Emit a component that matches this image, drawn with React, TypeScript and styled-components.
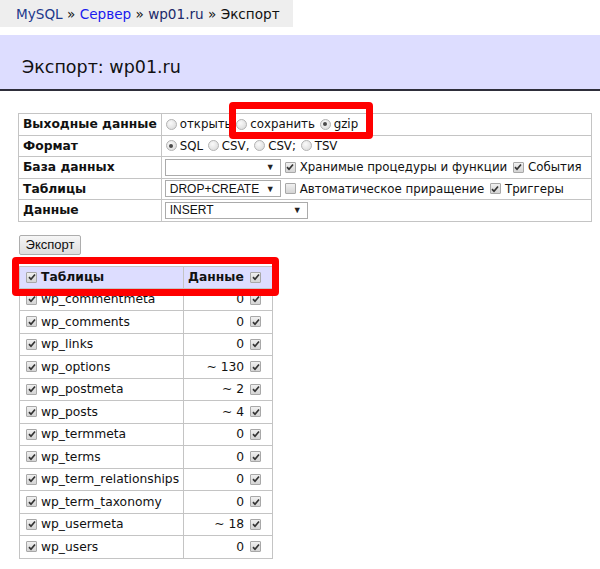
import styled, { createGlobalStyle } from "styled-components"

const GlobalStyle = createGlobalStyle`
  body {
    margin: 0;
    background: #fff;
    font-family: "DejaVu Sans", Verdana, sans-serif;
    color: #111;
  }
`

const Page = styled.div`
  position: relative;
  width: 600px;
  height: 569px;
  overflow: hidden;
`
const Crumbs = styled.div`
  display: inline-flex;
  align-items: center;
  width: 293px;
  height: 27px;
  box-sizing: border-box;
  padding-left: 16px;
  background: #eeeeee;
  font-size: 13.6px;
  white-space: pre;
`
const Crumb = styled.span<{ $color?: string }>`
  color: ${(p) => p.$color || "#111"};
`
const TitleBar = styled.div`
  margin-top: 8px;
  height: 56px;
  box-sizing: border-box;
  display: flex;
  align-items: center;
  padding: 9px 0 0 22px;
  background: #ddddff;
  border-bottom: 2px solid #2e2e3a;
  font-size: 17.5px;
  color: #111;
`
const Content = styled.div`
  padding: 22px 0 0 18px;
  font-size: 12.3px;
`
const Grid = styled.table<{ $width: number }>`
  width: ${(p) => p.$width}px;
  border-collapse: collapse;
  border: 1px solid #c4c4c4;
`
const Label = styled.td`
  width: 132px;
  height: 20.5px;
  padding: 0 4px;
  font-weight: bold;
  border: 1px solid #c4c4c4;
  white-space: nowrap;
`
const Value = styled.td`
  padding: 0 3px;
  border: 1px solid #c4c4c4;
  white-space: nowrap;
  font-size: 11.8px;
`
const Line = styled.div`
  display: flex;
  align-items: center;
  white-space: pre;
`
const Radio = styled.span<{ $checked?: boolean }>`
  display: inline-block;
  position: relative;
  width: 11px;
  height: 11px;
  margin: 0 3px 0 1px;
  border-radius: 50%;
  box-sizing: border-box;
  border: 1px solid #b4b4b4;
  background: radial-gradient(circle at 40% 35%, #fafafa, #d6d6d6);
  &::after {
    content: "";
    display: ${(p) => (p.$checked ? "block" : "none")};
    position: absolute;
    left: 2.5px;
    top: 2.5px;
    width: 4px;
    height: 4px;
    border-radius: 50%;
    background: #4a4a4a;
  }
`
const Box = styled.span`
  display: inline-flex;
  align-items: center;
  justify-content: center;
  width: 11px;
  height: 11px;
  box-sizing: border-box;
  margin: 0 4px 0 2px;
  border: 1px solid #a8a8a8;
  border-radius: 1px;
  background: linear-gradient(#f0f0f0, #d4d4d4);
  flex-shrink: 0;
`
const Select = styled.div<{ $width: number }>`
  display: inline-flex;
  align-items: center;
  justify-content: space-between;
  width: ${(p) => p.$width}px;
  height: 17px;
  box-sizing: border-box;
  margin: 1px 2px 1px 0;
  padding: 0 5px 0 4px;
  border: 1px solid #ababab;
  background: #fff;
  font-family: "Liberation Sans", Arial, sans-serif;
  font-size: 12px;
`
const Arrow = styled.span`
  font-size: 9px;
  color: #222;
`
const Button = styled.div`
  display: inline-flex;
  align-items: center;
  justify-content: center;
  margin: 13px 0 11px 1px;
  width: 62px;
  height: 20px;
  box-sizing: border-box;
  border: 1px solid #adadad;
  border-radius: 2px;
  background: linear-gradient(#f6f6f6, #dedede);
  font-family: "Liberation Sans", Arial, sans-serif;
  font-size: 13px;
`
const TablesWrap = styled.div`
  margin-left: 1px;
`
const HeadCell = styled.th<{ $right?: boolean }>`
  height: 21px;
  padding: 0 ${(p) => (p.$right ? "7px" : "4px")} 0 4px;
  background: #ddddff;
  border: 1px solid #c4c4c4;
  text-align: ${(p) => (p.$right ? "right" : "left")};
  white-space: nowrap;
`
const NameCell = styled.td`
  width: 158px;
  height: 21.5px;
  padding: 0 4px;
  border: 1px solid #c4c4c4;
  white-space: nowrap;
`
const CountCell = styled.td`
  padding: 0 7px 0 4px;
  border: 1px solid #c4c4c4;
  text-align: right;
  white-space: nowrap;
`
const RightLine = styled(Line)`
  justify-content: flex-end;
`
const Mark = styled.div<{ $x: number; $y: number; $w: number; $h: number }>`
  position: absolute;
  left: ${(p) => p.$x}px;
  top: ${(p) => p.$y}px;
  width: ${(p) => p.$w}px;
  height: ${(p) => p.$h}px;
  box-sizing: border-box;
  border: 7px solid #ff0000;
  border-radius: 4px;
  pointer-events: none;
`

const Check = ({ on = true }: { on?: boolean }) => (
  <Box>
    {on && (
      <svg width="8" height="8" viewBox="0 0 8 8">
        <path d="M1 4.2 L3 6.3 L7 1.5" fill="none" stroke="#333" strokeWidth="1.7" />
      </svg>
    )}
  </Box>
)

const tables: [string, string][] = [
  ["wp_commentmeta", "0"],
  ["wp_comments", "0"],
  ["wp_links", "0"],
  ["wp_options", "~ 130"],
  ["wp_postmeta", "~ 2"],
  ["wp_posts", "~ 4"],
  ["wp_termmeta", "0"],
  ["wp_terms", "0"],
  ["wp_term_relationships", "0"],
  ["wp_term_taxonomy", "0"],
  ["wp_usermeta", "~ 18"],
  ["wp_users", "0"],
]

export default function App() {
  return (
    <Page>
      <GlobalStyle />
      <Crumbs>
        <Crumb $color="#1d3a8c">MySQL</Crumb>
        <Crumb> » </Crumb>
        <Crumb $color="#1a1aee">Сервер</Crumb>
        <Crumb> » </Crumb>
        <Crumb $color="#1c2a6a">wp01.ru</Crumb>
        <Crumb> » Экспорт</Crumb>
      </Crumbs>
      <TitleBar>Экспорт: wp01.ru</TitleBar>
      <Content>
        <Grid $width={574}>
          <tbody>
            <tr>
              <Label>Выходные данные</Label>
              <Value>
                <Line>
                  <Radio />открыть <Radio />сохранить <Radio $checked />gzip
                </Line>
              </Value>
            </tr>
            <tr>
              <Label>Формат</Label>
              <Value>
                <Line>
                  <Radio $checked />SQL <Radio />CSV, <Radio />CSV; <Radio />TSV
                </Line>
              </Value>
            </tr>
            <tr>
              <Label>База данных</Label>
              <Value>
                <Line>
                  <Select $width={116}>
                    <span />
                    <Arrow>▼</Arrow>
                  </Select>
                  <Check />Хранимые процедуры и функции <Check />События
                </Line>
              </Value>
            </tr>
            <tr>
              <Label>Таблицы</Label>
              <Value>
                <Line>
                  <Select $width={116}>
                    <span>DROP+CREATE</span>
                    <Arrow>▼</Arrow>
                  </Select>
                  <Check on={false} />Автоматическое приращение <Check />Триггеры
                </Line>
              </Value>
            </tr>
            <tr>
              <Label>Данные</Label>
              <Value>
                <Line>
                  <Select $width={143}>
                    <span>INSERT</span>
                    <Arrow>▼</Arrow>
                  </Select>
                </Line>
              </Value>
            </tr>
          </tbody>
        </Grid>
        <Button>Экспорт</Button>
        <TablesWrap>
          <Grid $width={252}>
            <thead>
              <tr>
                <HeadCell>
                  <Line>
                    <Check />Таблицы
                  </Line>
                </HeadCell>
                <HeadCell $right>
                  <RightLine>
                    Данные <Check />
                  </RightLine>
                </HeadCell>
              </tr>
            </thead>
            <tbody>
              {tables.map(([name, count]) => (
                <tr key={name}>
                  <NameCell>
                    <Line>
                      <Check />{name}
                    </Line>
                  </NameCell>
                  <CountCell>
                    <RightLine>
                      {count} <Check />
                    </RightLine>
                  </CountCell>
                </tr>
              ))}
            </tbody>
          </Grid>
        </TablesWrap>
      </Content>
      <Mark $x={229} $y={102} $w={144} $h={37} />
      <Mark $x={12} $y={257} $w={267} $h={39} />
    </Page>
  )
}
